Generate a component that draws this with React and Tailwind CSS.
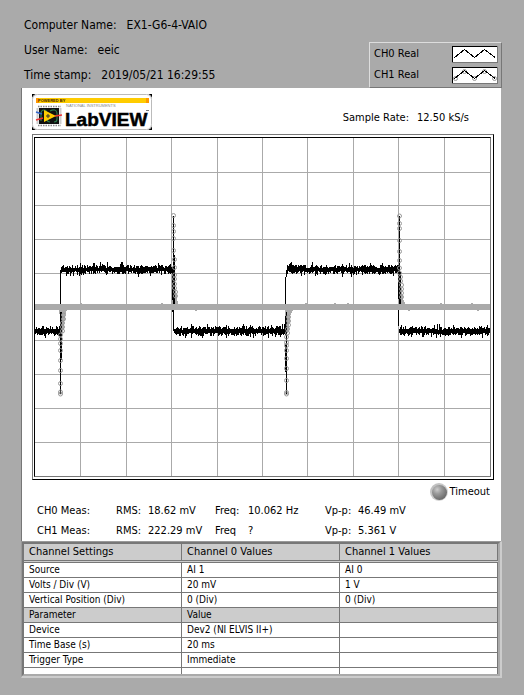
import React from "react";

const FONT = "font-['DejaVu_Sans_Condensed','DejaVu_Sans',sans-serif]";

function random(seed) {
  let s = seed;
  return () => {
    s = (s * 1664525 + 1013904223) % 4294967296;
    return s / 4294967296;
  };
}

// A noisy level drawn as one vertical stroke for each pixel column.
function noise(from, to, level, seed) {
  const next = random(seed);
  let d = "";
  for (let x = from; x <= to; x += 1) {
    const up = 1.5 + next() * 3.5 + (next() > 0.88 ? 2.5 : 0);
    const down = 1.5 + next() * 3.5 + (next() > 0.88 ? 2.5 : 0);
    d += `M${x + 0.5} ${(level - up).toFixed(1)}V${(level + down).toFixed(1)}`;
  }
  return d;
}

const SPIKES = [
  {
    line: "M25.5 174V256 M26.5 174V222",
    tail: "M24 172H32L30 177L29 190L27 197Z",
    x: 25.5,
    ys: [256, 254, 245.5, 232.5, 222.5, 212.5, 205.5, 201, 197],
    dense: [[27.5, 193], [27.5, 189], [27.5, 185], [28.5, 181], [28.5, 177]],
  },
  {
    line: "M138.5 78V166 M139.5 117V166",
    tail: "M137 167H144L142 161L141 152L139 146Z",
    x: 138.5,
    ys: [77.5, 87.5, 93.5, 100.5, 112.5],
    dense: [[139.5, 121.5], [139.5, 129.5], [139.5, 137], [139.5, 141], [139.5, 146], [139.5, 150], [140.5, 154], [140.5, 158]],
  },
  {
    line: "M251.5 174V256 M250.5 206V234",
    tail: "M250 172H258L255 178L254 190L252 197Z",
    x: 251.5,
    ys: [256, 254.5, 242.5, 230.5, 220.5, 212.5, 207.5, 204.5, 199],
    dense: [[252.5, 195], [252.5, 191], [253.5, 187], [253.5, 183], [253.5, 179]],
  },
  {
    line: "M364.5 78V166 M365.5 134V166",
    tail: "M363 167H371L368 161L367 152L365 144Z",
    x: 364.5,
    ys: [78, 85.5, 90.5, 102.5, 113.5, 122.5, 130, 135],
    dense: [[365.5, 139], [365.5, 143], [366.5, 147], [366.5, 151], [366.5, 155], [366.5, 159]],
  },
];

const GRID_X = [45, 91, 136, 182, 227, 272, 318, 363, 409];
const GRID_Y = [34, 67, 101, 135, 169, 202, 236, 270, 304];

function Plot() {
  return (
    <div className="border border-t-[#777] border-l-[#777] border-r-black border-b-black pt-[2px] pr-[2px] pb-[2px] pl-px">
      <div className="border border-t-black border-l-black border-r-[#777] border-b-[#777]">
        <svg viewBox="0 0 455 338" className="block w-full" role="img" aria-label="Oscilloscope traces" shapeRendering="crispEdges">
          <g stroke="#aaa" strokeWidth="1">
            {GRID_X.map((x) => (
              <path key={x} d={`M${x + 0.5} 0V338`} />
            ))}
            {GRID_Y.map((y) => (
              <path key={y} d={`M0 ${y + 0.5}H455`} />
            ))}
          </g>
          <g stroke="#000" strokeWidth="1" fill="none">
            <path d={noise(0, 25, 193, 11)} />
            <path d={noise(26, 137, 131.5, 23)} />
            <path d={noise(139, 250, 193, 37)} />
            <path d={noise(252, 363, 131.5, 41)} />
            <path d={noise(364, 454, 193, 59)} />
            <path d="M25.5 132V193 M137.5 131V174 M138.5 160V193 M250.5 139V193 M251.5 132V139 M363.5 131V188" />
          </g>
          <rect x="0" y="166" width="455" height="6" fill="#aaa" />
          <path d="M45 165h2v1h-2z M126 165h2v1h-2z M160 172h2v1h-2z M270 165h2v1h-2z M299 165h2v1h-2z M312 165h2v1h-2z M373 172h2v1h-2z M405 165h2v1h-2z M436 165h2v1h-2z M442 172h2v1h-2z" fill="#aaa" />
          {SPIKES.map((s) => (
            <g key={s.x} fill="none">
              <path d={s.tail} fill="#aaa" />
              <path d={s.line} stroke="#000" />
              <g stroke="#999" shapeRendering="geometricPrecision">
                {s.ys.map((y) => (
                  <circle key={y} cx={s.x} cy={y} r="2" />
                ))}
                {s.dense.map(([x, y]) => (
                  <circle key={y} cx={x} cy={y} r="2" />
                ))}
              </g>
            </g>
          ))}
        </svg>
      </div>
    </div>
  );
}

function Logo() {
  return (
    <svg viewBox="0 0 120 36" className="block h-9 w-[120px]" role="img" aria-label="LabVIEW">
      <rect width="120" height="36" fill="#000" />
      <rect width="120" height="36" rx="5" fill="#fff" />
      <rect x="0.5" y="0.5" width="119" height="35" rx="5" fill="none" stroke="#bbb" />
      <rect x="4" y="4" width="112" height="5" fill="#fc0" />
      <rect x="4" y="4" width="3" height="5" fill="#f90" />
      <rect x="114" y="4" width="3" height="5" fill="#f90" />
      <text x="6" y="8" fontSize="4" fontWeight="700" fontFamily="Liberation Sans, sans-serif" fill="#420">
        POWERED BY
      </text>
      <path d="M6 12.5H29M6 31.5H29" stroke="#888" strokeWidth="1.5" strokeDasharray="1.5 1" />
      <rect x="7" y="14" width="20" height="16" fill="#111" />
      <path d="M5.5 14V30M28.5 14V30" stroke="#ccc" strokeWidth="2" />
      <path d="M9 27V20Q9 16 12 16T15 20V25Q15 28 18 28M18 17Q24 14 25 19V25Q25 28 22 28" fill="none" stroke="#2a7a4a" strokeWidth="1.2" />
      <path d="M4 18L10 20" stroke="#36c" strokeWidth="1.5" />
      <path d="M4 26L11 24" stroke="#e33" strokeWidth="1.5" />
      <path d="M23 22L30 21" stroke="#e33" strokeWidth="1.5" />
      <path d="M12 16L24 22L12 28Z" fill="#fc0" />
      <path d="M14 22H18M16 20V24" stroke="#333" />
      <text x="34" y="13" fontSize="4" fontFamily="Liberation Sans, sans-serif" fill="#888">
        NATIONAL INSTRUMENTS
      </text>
      <text x="33" y="32" fontSize="19" fontWeight="700" fontFamily="Liberation Sans, sans-serif" fill="#000" stroke="#000" strokeWidth="0.5">
        LabVIEW
      </text>
      <path d="M114 16.5H117" stroke="#777" />
    </svg>
  );
}

function LegendRow({ label, points }) {
  return (
    <div className="flex h-[17px] items-center justify-between">
      <span>{label}</span>
      <svg viewBox="0 0 46 17" className="block h-[17px] w-[46px]" shapeRendering="crispEdges" aria-hidden="true">
        <rect width="46" height="17" fill="#777" />
        <rect width="45" height="16" fill="#000" />
        <rect x="1" y="1" width="44" height="15" fill="#fff" />
        {points && (
          <g fill="none" stroke="#999" shapeRendering="geometricPrecision">
            <circle cx="3.5" cy="11.5" r="2" />
            <circle cx="12.5" cy="4.5" r="2" />
            <circle cx="22.5" cy="11.5" r="2" />
            <circle cx="32.5" cy="4.5" r="2" />
            <circle cx="42.5" cy="11.5" r="2" />
          </g>
        )}
        <path d="M2.5 11.5L12.5 3.5L22.5 11.5L32.5 3.5L43 11.5" fill="none" stroke="#000" />
      </svg>
    </div>
  );
}

function Info({ label, value }) {
  return (
    <div className="flex gap-2.5">
      <span>{label}</span>
      <span>{value}</span>
    </div>
  );
}

function Measurement({ name, rms, freqLabel, freq, vpp }) {
  return (
    <div className="grid grid-cols-[79px_32px_67px_33px_77px_33px_1fr] pl-[5px] leading-5">
      <span>{name}</span>
      <span>RMS:</span>
      <span>{rms}</span>
      <span>{freqLabel}</span>
      <span>{freq}</span>
      <span>Vp-p:</span>
      <span>{vpp}</span>
    </div>
  );
}

const ROWS = [
  ["Source", "AI 1", "AI 0"],
  ["Volts / Div (V)", "20 mV", "1 V"],
  ["Vertical Position (Div)", "0 (Div)", "0 (Div)"],
  ["Parameter", "Value", ""],
  ["Device", "Dev2 (NI ELVIS II+)", ""],
  ["Time Base (s)", "20 ms", ""],
  ["Trigger Type", "Immediate", ""],
];

function Settings() {
  return (
    <div className="border-t border-r-2 border-b-2 border-l border-t-[#999] border-r-[#ccc] border-b-[#ccc] border-l-[#999]">
      <div className="border-2 border-t-[#777] border-r-[#aaa] border-b-[#aaa] border-l-[#777]">
        <table className="w-full table-fixed border-separate border-spacing-0 bg-white text-[10px] leading-[14px]">
          <thead>
            <tr className="bg-[#ccc] text-left text-[11px] leading-4">
              {["Channel Settings", "Channel 0 Values", "Channel 1 Values"].map((h) => (
                <th key={h} scope="col" className="border-r border-b border-[#777] p-0 pl-[5px] font-normal">
                  {h}
                </th>
              ))}
            </tr>
            <tr className="bg-[#ccc]" aria-hidden="true">
              <td colSpan={3} className="h-[2px] border-b border-[#777] p-0" />
            </tr>
          </thead>
          <tbody>
            {ROWS.map((row) => (
              <tr key={row[0]} className={row[0] === "Parameter" ? "bg-[#ccc]" : "bg-white"}>
                {row.map((cell, i) => (
                  <td key={i} className="h-[15px] border-r border-b border-[#777] p-0 pl-[5px] whitespace-nowrap">
                    {cell}
                  </td>
                ))}
              </tr>
            ))}
            <tr>
              <td className="h-[6px] border-r border-[#777] p-0" />
              <td className="h-[6px] border-r border-[#777] p-0" />
              <td className="h-[6px] border-r border-[#777] p-0" />
            </tr>
          </tbody>
        </table>
      </div>
    </div>
  );
}

export default function App() {
  return (
    <main className={`min-h-screen bg-[#aaa] pr-[22px] pl-[21px] text-[11px] text-black ${FONT}`}>
      <header className="flex items-end justify-between pt-[13px]">
        <div className="pl-[3px] text-[12px] leading-[25px]">
          <Info label="Computer Name:" value="EX1-G6-4-VAIO" />
          <Info label="User Name:" value="eeic" />
          <Info label="Time stamp:" value="2019/05/21 16:29:55" />
        </div>
        <div className="flex w-[133px] flex-col gap-1 border border-t-[#ddd] border-r-[#777] border-b-[#777] border-l-[#ddd] py-[3px] pr-[3px] pl-1">
          <LegendRow label="CH0 Real" />
          <LegendRow label="CH1 Real" points />
        </div>
      </header>

      <section className="mr-px border-l border-[#777] bg-white pr-[7px] pl-[10px]">
        <div className="flex items-start justify-between pt-1.5 pb-1">
          <Logo />
          <div className="flex gap-2 pt-[17px] pr-[25px] leading-[14px]">
            <span>Sample Rate:</span>
            <span>12.50 kS/s</span>
          </div>
        </div>
        <Plot />
        <div className="mt-px flex h-5 items-end justify-end gap-0.5 pr-1">
          <svg viewBox="0 0 18 18" className="block size-[18px]" aria-hidden="true">
            <defs>
              <radialGradient id="led" cx="0.35" cy="0.3" r="0.75">
                <stop offset="0" stopColor="#ccc" />
                <stop offset="0.4" stopColor="#999" />
                <stop offset="1" stopColor="#666" />
              </radialGradient>
              <linearGradient id="ring" x1="0" y1="0" x2="1" y2="1">
                <stop offset="0" stopColor="#bbb" />
                <stop offset="1" stopColor="#ddd" />
              </linearGradient>
            </defs>
            <circle cx="9" cy="9" r="9" fill="url(#ring)" />
            <circle cx="9.5" cy="9.5" r="7.5" fill="url(#led)" />
          </svg>
          <span className="leading-[18px]">Timeout</span>
        </div>
        <Measurement name="CH0 Meas:" rms="18.62 mV" freqLabel="Freq:" freq="10.062 Hz" vpp="46.49 mV" />
        <Measurement name="CH1 Meas:" rms="222.29 mV" freqLabel="Freq" freq="?" vpp="5.361 V" />
      </section>

      <Settings />
    </main>
  );
}
